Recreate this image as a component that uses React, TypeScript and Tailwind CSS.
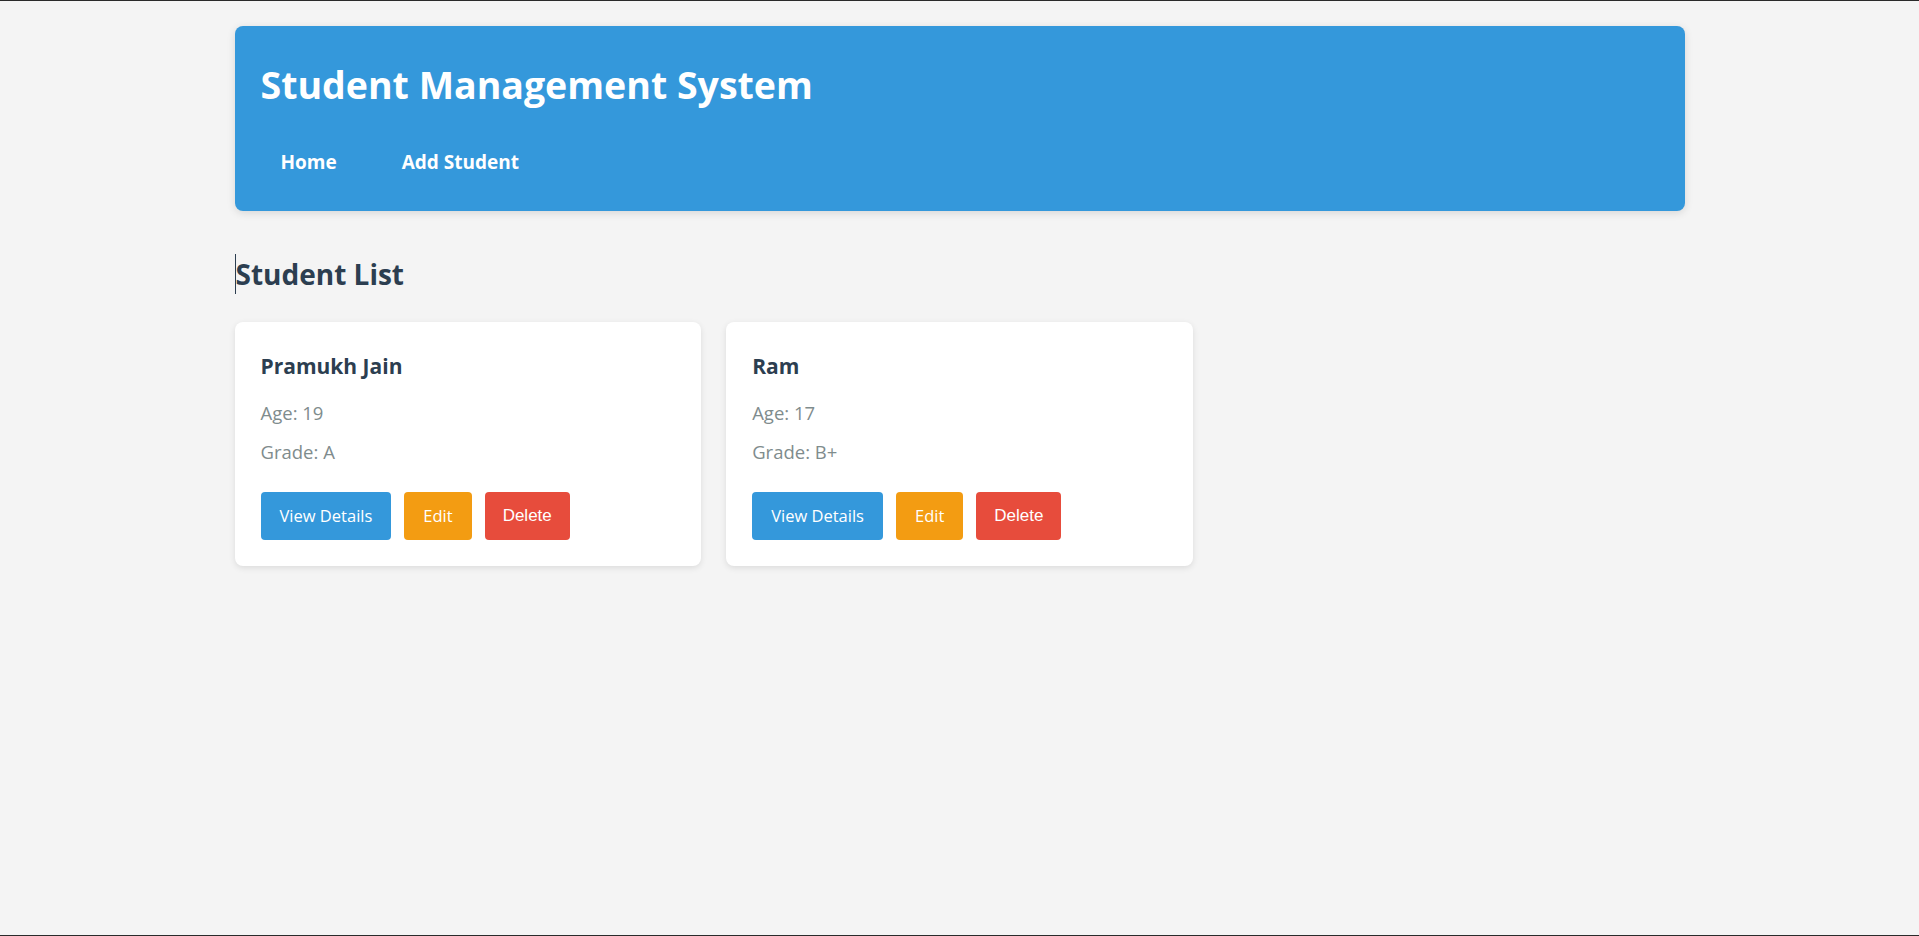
import React from 'react';

interface Student {
  id: number;
  name: string;
  age: number;
  grade: string;
}

const students: Student[] = [
  { id: 1, name: 'Pramukh Jain', age: 19, grade: 'A' },
  { id: 2, name: 'Ram', age: 17, grade: 'B+' },
];

const font = { fontFamily: '"Open Sans", "Noto Sans", sans-serif' };

const StudentCard: React.FC<{ student: Student }> = ({ student }) => (
  <div className="bg-white rounded-lg shadow-[0_2px_6px_rgba(0,0,0,0.1)] px-[26px] pt-[30px] pb-[26px]">
    <h3 className="text-[21px] leading-[28px] font-bold text-[#2c3e50]">{student.name}</h3>
    <p className="mt-[20px] text-[18.5px] leading-[26px] text-[#7f8c8d]">Age: {student.age}</p>
    <p className="mt-[13px] text-[18.5px] leading-[26px] text-[#7f8c8d]">Grade: {student.grade}</p>
    <div className="mt-[27px] flex gap-[13px]">
      <button className="h-[48px] px-[19px] rounded bg-[#3498db] text-white text-[16.5px]">View Details</button>
      <button className="h-[48px] px-[19px] rounded bg-[#f39c12] text-white text-[16.5px]">Edit</button>
      <button className="h-[48px] px-[18px] rounded bg-[#e74c3c] text-white text-[17px] font-['Liberation_Sans']">
        Delete
      </button>
    </div>
  </div>
);

export default function App() {
  return (
    <div className="min-h-[936px] bg-[#f4f4f4] border-t border-b border-[#2a2a2a]" style={font}>
      <div className="w-[1450px] mx-auto pt-[25px]">
        <header className="bg-[#3498db] rounded-lg shadow-[0_2px_8px_rgba(0,0,0,0.12)] h-[185px] px-[26px] pt-[33px]">
          <h1 className="text-white text-[37.5px] leading-[52px] font-bold">Student Management System</h1>
          <nav className="mt-[29px] flex gap-[25px]">
            <a className="text-white font-bold text-[19px] px-[20px] py-[8px]">Home</a>
            <a className="text-white font-bold text-[19px] px-[20px] py-[8px]">Add Student</a>
          </nav>
        </header>

        <h2 className="mt-[43px] text-[28px] leading-[40px] font-bold text-[#2c3e50] border-l border-[#2c3e50]">
          Student List
        </h2>

        <div className="mt-[28px] grid grid-cols-3 gap-[25px]">
          {students.map((s) => (
            <StudentCard key={s.id} student={s} />
          ))}
        </div>
      </div>
    </div>
  );
}
